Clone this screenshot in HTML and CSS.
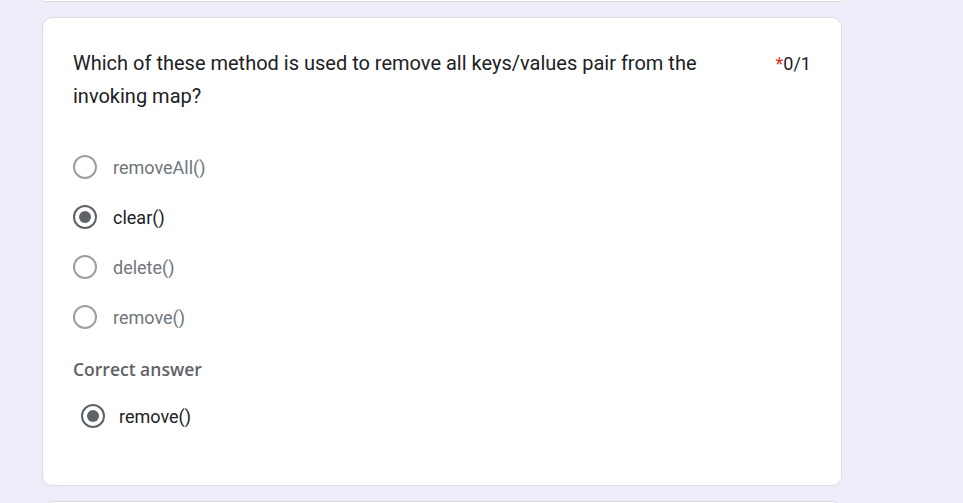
FILE: index.html
```html
<!DOCTYPE html>
<html>
<head>
<meta charset="utf-8">
<link rel="stylesheet" href="styles.css">
</head>
<body>
<div class="page">
  <div class="card card-prev"></div>
  <div class="card question">
    <div class="q-head">
      <div class="q-title">Which of these method is used to remove all keys/values pair from the invoking map?</div>
      <div class="q-score"><span class="req">*</span>0/1</div>
    </div>
    <div class="options">
      <div class="option"><span class="radio"></span><span class="opt-label">removeAll()</span></div>
      <div class="option selected"><span class="radio checked"></span><span class="opt-label">clear()</span></div>
      <div class="option"><span class="radio"></span><span class="opt-label">delete()</span></div>
      <div class="option"><span class="radio"></span><span class="opt-label">remove()</span></div>
    </div>
    <div class="correct">
      <div class="correct-title">Correct answer</div>
      <div class="option correct-option"><span class="radio checked"></span><span class="opt-label">remove()</span></div>
    </div>
  </div>
  <div class="card card-next"></div>
</div>
</body>
</html>
```
FILE: styles.css
```css
html, body {
  margin: 0;
  padding: 0;
  background: #efebf8;
  height: 503px;
  overflow: hidden;
}
.page {
  margin-left: 42px;
  width: 800px;
  display: flex;
  flex-direction: column;
  gap: 15px;
}
.card {
  background: #fff;
  border: 1px solid #dadce0;
  border-radius: 10px;
  box-sizing: border-box;
}
.card-prev {
  height: 2px;
  border-top: none;
  border-radius: 0 0 10px 10px;
}
.card-next {
  height: 20px;
}
.question {
  height: 469px;
  padding: 30px 30px 0 30px;
  font-family: Roboto, "Liberation Sans", sans-serif;
}
.q-head {
  display: flex;
  justify-content: space-between;
  align-items: flex-start;
  gap: 40px;
}
.q-title {
  font-size: 20px;
  line-height: 33px;
  color: #202124;
  max-width: 660px;
  margin-top: -1px;
}
.q-score {
  font-size: 18px;
  line-height: 33px;
  color: #202124;
  white-space: nowrap;
  margin-top: -1px;
}
.req {
  color: #d93025;
}
.options {
  margin-top: 29px;
  display: flex;
  flex-direction: column;
}
.option {
  height: 50px;
  display: flex;
  align-items: center;
  gap: 16px;
}
.radio {
  width: 24px;
  height: 24px;
  box-sizing: border-box;
  border: 2px solid #9aa0a6;
  border-radius: 50%;
  display: flex;
  align-items: center;
  justify-content: center;
  flex: none;
}
.radio.checked {
  border-color: #5f6368;
}
.radio.checked::after {
  content: "";
  width: 12px;
  height: 12px;
  border-radius: 50%;
  background: #5f6368;
}
.opt-label {
  font-size: 18px;
  color: #70757a;
}
.option.selected .opt-label,
.correct-option .opt-label {
  color: #202124;
}
.correct {
  margin-top: 15px;
}
.correct-title {
  font-family: "Open Sans", Roboto, sans-serif;
  font-weight: 600;
  font-size: 17.5px;
  color: #5f6368;
  line-height: 24px;
}
.correct-option {
  margin-top: 10px;
  padding-left: 8px;
  gap: 14px;
}
```
